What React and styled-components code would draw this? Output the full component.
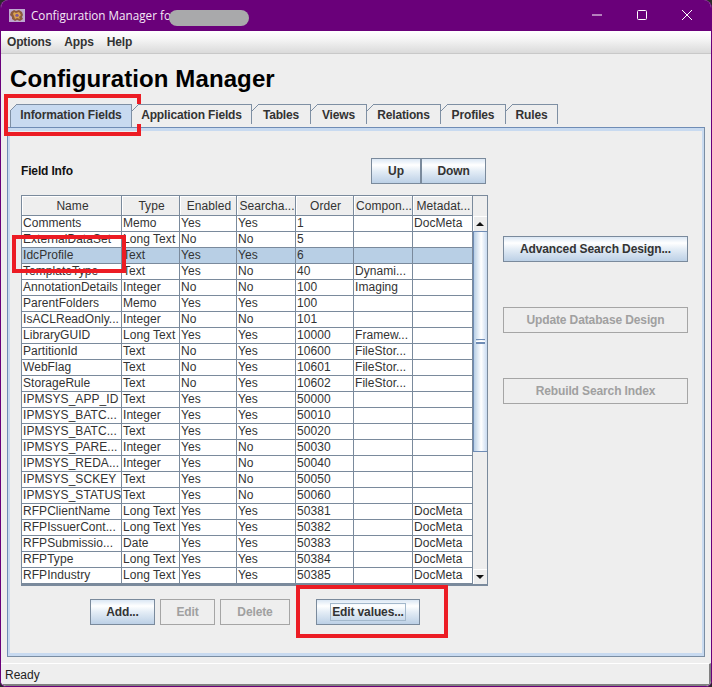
import React from 'react';
import styled, { createGlobalStyle } from 'styled-components';

const GlobalStyle = createGlobalStyle`
  html, body {
    margin: 0;
    padding: 0;
    background: #2b2b2b;
  }
  * {
    box-sizing: border-box;
  }
`;

const TABS = [
  { label: 'Information Fields', width: 122 },
  { label: 'Application Fields', width: 120 },
  { label: 'Tables', width: 59 },
  { label: 'Views', width: 56 },
  { label: 'Relations', width: 74 },
  { label: 'Profiles', width: 65 },
  { label: 'Rules', width: 52 },
];

const COLUMNS = [
  { name: 'Name', width: 100 },
  { name: 'Type', width: 58 },
  { name: 'Enabled', width: 57 },
  { name: 'Searcha...', width: 59 },
  { name: 'Order', width: 58 },
  { name: 'Compon...', width: 59 },
  { name: 'Metadat...', width: 60 },
];

const ROWS = [
  ['Comments', 'Memo', 'Yes', 'Yes', '1', '', 'DocMeta'],
  ['ExternalDataSet', 'Long Text', 'No', 'No', '5', '', ''],
  ['IdcProfile', 'Text', 'Yes', 'Yes', '6', '', ''],
  ['TemplateType', 'Text', 'Yes', 'No', '40', 'Dynami...', ''],
  ['AnnotationDetails', 'Integer', 'No', 'No', '100', 'Imaging', ''],
  ['ParentFolders', 'Memo', 'Yes', 'Yes', '100', '', ''],
  ['IsACLReadOnly...', 'Integer', 'No', 'No', '101', '', ''],
  ['LibraryGUID', 'Long Text', 'Yes', 'Yes', '10000', 'Framew...', ''],
  ['PartitionId', 'Text', 'No', 'Yes', '10600', 'FileStor...', ''],
  ['WebFlag', 'Text', 'No', 'Yes', '10601', 'FileStor...', ''],
  ['StorageRule', 'Text', 'No', 'Yes', '10602', 'FileStor...', ''],
  ['IPMSYS_APP_ID', 'Text', 'Yes', 'Yes', '50000', '', ''],
  ['IPMSYS_BATC...', 'Integer', 'Yes', 'Yes', '50010', '', ''],
  ['IPMSYS_BATC...', 'Text', 'Yes', 'Yes', '50020', '', ''],
  ['IPMSYS_PARE...', 'Integer', 'Yes', 'No', '50030', '', ''],
  ['IPMSYS_REDA...', 'Integer', 'Yes', 'No', '50040', '', ''],
  ['IPMSYS_SCKEY', 'Text', 'Yes', 'No', '50050', '', ''],
  ['IPMSYS_STATUS', 'Text', 'Yes', 'No', '50060', '', ''],
  ['RFPClientName', 'Long Text', 'Yes', 'Yes', '50381', '', 'DocMeta'],
  ['RFPIssuerCont...', 'Long Text', 'Yes', 'Yes', '50382', '', 'DocMeta'],
  ['RFPSubmissio...', 'Date', 'Yes', 'Yes', '50383', '', 'DocMeta'],
  ['RFPType', 'Long Text', 'Yes', 'Yes', '50384', '', 'DocMeta'],
  ['RFPIndustry', 'Long Text', 'Yes', 'Yes', '50385', '', 'DocMeta'],
  ['', '', '', '', '', '', ''],
];

export default function App() {
  return (
    <>
      <GlobalStyle />
      <Window>
        <TitleBar>
          <AppIcon viewBox="0 0 16 13">
            <rect width="16" height="13" fill="#bfa9d0" />
            <path d="M2 3l3-2 2 1 3-1 3 2 1 3-1 2 1 2-3 2-3-1-2 1-3-2 0-2-2-2z" fill="#8d5a3e" />
            <path d="M5 3l2 1 3-1 2 3-2 2 1 2-3-1-2 1-1-3-1-2z" fill="#dca24e" />
            <path d="M7 5l2 0 1 2-2 1-2-1z" fill="#7f5a96" />
          </AppIcon>
          <TitleText>Configuration Manager fo</TitleText>
          <TitleBlur />
          <WindowControls>
            <WindowIcon viewBox="0 0 10 10">
              <path d="M0 5h10" />
            </WindowIcon>
            <WindowIcon viewBox="0 0 10 10">
              <rect x="0.5" y="0.5" width="9" height="9" rx="1" />
            </WindowIcon>
            <WindowIcon viewBox="0 0 10 10">
              <path d="M0 0l10 10M10 0L0 10" />
            </WindowIcon>
          </WindowControls>
        </TitleBar>

        <MenuBar>
          <MenuItem>Options</MenuItem>
          <MenuItem>Apps</MenuItem>
          <MenuItem>Help</MenuItem>
        </MenuBar>

        <Content>
          <Heading>Configuration Manager</Heading>

          <TabStrip>
            {TABS.map((tab, index) => (
              <Tab key={tab.label} $width={tab.width} $active={index === 0}>{tab.label}</Tab>
            ))}
          </TabStrip>

          <TabPanel>
            <LeftColumn>
              <FieldInfoRow>
                <FieldInfoLabel>Field Info</FieldInfoLabel>
                <ButtonPair>
                  <ActionButton $width={50}>Up</ActionButton>
                  <ActionButton $width={65}>Down</ActionButton>
                </ButtonPair>
              </FieldInfoRow>

              <TableFrame>
                <FieldTable>
                  <colgroup>
                    {COLUMNS.map((col) => (
                      <col key={col.name} width={col.width} />
                    ))}
                  </colgroup>
                  <thead>
                    <tr>
                      {COLUMNS.map((col) => (
                        <HeaderCell key={col.name}>{col.name}</HeaderCell>
                      ))}
                    </tr>
                  </thead>
                  <tbody>
                    {ROWS.map((row, rowIndex) => (
                      <tr key={rowIndex}>
                        {row.map((cell, cellIndex) => (
                          <Cell key={cellIndex} $selected={rowIndex === 2}>{cell}</Cell>
                        ))}
                      </tr>
                    ))}
                  </tbody>
                </FieldTable>

                <ScrollBar>
                  <HeaderGap />
                  <ScrollButton>
                    <ArrowIcon viewBox="0 0 8 4">
                      <path d="M4 0l4 4H0z" />
                    </ArrowIcon>
                  </ScrollButton>
                  <ScrollThumb>
                    <Grip />
                  </ScrollThumb>
                  <ScrollTrack />
                  <ScrollButton>
                    <ArrowIcon viewBox="0 0 8 4">
                      <path d="M0 0h8L4 4z" />
                    </ArrowIcon>
                  </ScrollButton>
                </ScrollBar>
              </TableFrame>

              <BottomButtons>
                <ActionButton $width={65}>Add...</ActionButton>
                <ActionButton $width={55} disabled>Edit</ActionButton>
                <ActionButton $width={70} disabled>Delete</ActionButton>
                <EditValuesButton $width={104}>
                  <FocusRing>Edit values...</FocusRing>
                </EditValuesButton>
              </BottomButtons>
            </LeftColumn>

            <RightColumn>
              <ActionButton $width={185}>Advanced Search Design...</ActionButton>
              <ActionButton $width={185} disabled>Update Database Design</ActionButton>
              <ActionButton $width={185} disabled>Rebuild Search Index</ActionButton>
            </RightColumn>
          </TabPanel>
        </Content>

        <StatusBar>Ready</StatusBar>

        <Annotation $x={3} $y={94} $w={137} $h={42} />
        <Annotation $x={11} $y={235} $w={114} $h={38} />
        <Annotation $x={295} $y={585} $w={152} $h={53} />
      </Window>
    </>
  );
}

const Window = styled.div`
  position: relative;
  display: flex;
  flex-direction: column;
  width: 712px;
  height: 687px;
  overflow: hidden;
  background: #eeeeee;
  border: 1px solid #6a007a;
  border-top: 0;
  border-radius: 8px 8px 6px 6px;
  font-family: 'Liberation Sans', Arial, sans-serif;
  font-size: 12px;
  color: #333333;
`;

const TitleBar = styled.div`
  position: relative;
  display: flex;
  align-items: center;
  flex: 0 0 31px;
  padding: 0 0 1px 8px;
  background: #6a007a;
`;

const AppIcon = styled.svg`
  width: 16px;
  height: 13px;
`;

const TitleText = styled.span`
  margin-left: 6px;
  font-family: 'Open Sans', 'Noto Sans', sans-serif;
  font-size: 11.7px;
  color: #f4e9f6;
`;

const TitleBlur = styled.div`
  position: absolute;
  left: 168px;
  top: 10px;
  width: 80px;
  height: 16px;
  border-radius: 8px;
  background: #a9a9ab;
`;

const WindowControls = styled.div`
  display: flex;
  align-items: center;
  gap: 35px;
  margin-left: auto;
  padding-right: 19px;
`;

const WindowIcon = styled.svg`
  width: 10px;
  height: 10px;
  overflow: visible;
  fill: none;
  stroke: #ffffff;
  stroke-width: 1;
`;

const MenuBar = styled.div`
  display: flex;
  align-items: center;
  gap: 13px;
  flex: 0 0 23px;
  padding: 0 0 1px 6px;
  background: linear-gradient(#ffffff, #f6f6f6 35%, #dadada);
  border-bottom: 1px solid #c8c8c8;
`;

const MenuItem = styled.span`
  font-weight: bold;
  letter-spacing: -0.15px;
`;

const Content = styled.div`
  display: flex;
  flex-direction: column;
  flex: 1;
  min-height: 0;
  padding: 0 6px 0 6px;
`;

const Heading = styled.h1`
  margin: 11px 0 12px 3px;
  height: 27px;
  font-size: 24px;
  line-height: 27px;
  font-weight: bold;
  letter-spacing: 0.1px;
  color: #000000;
`;

const TabStrip = styled.div`
  position: relative;
  z-index: 1;
  display: flex;
  flex: 0 0 19px;
  padding-left: 3px;
`;

const Tab = styled.div`
  position: relative;
  width: ${(p) => p.$width}px;
  height: ${(p) => (p.$active ? '23px' : '20px')};
  padding-top: 2px;
  border: 1px solid #7e8fa3;
  border-bottom: 0;
  border-left: ${(p) => (p.$active ? '1px solid #7e8fa3' : '0')};
  font-weight: bold;
  letter-spacing: -0.15px;
  line-height: 16px;
  text-align: center;
  white-space: nowrap;
  background: ${(p) => (p.$active ? '#c8daf0' : '#eeeeee')};

  &::before {
    content: '';
    position: absolute;
    top: -1px;
    left: ${(p) => (p.$active ? '-1px' : '0')};
    width: 7px;
    height: 7px;
    background: linear-gradient(135deg, #eeeeee 44%, #7e8fa3 44%, #7e8fa3 56%, transparent 56%);
  }
`;

const TabPanel = styled.div`
  display: flex;
  gap: 15px;
  width: 698px;
  height: 534px;
  padding: 30px 15px 0 13px;
  background: #eeeeee;
  border: 1px solid #6f8cb5;
  border-bottom-color: #7a8da3;
  border-right-color: #7a8da3;
  box-shadow: inset 0 3px 0 #c8daf0, inset 2px 0 0 #c8daf0, inset -2px 0 0 #c8daf0, inset 0 -3px 0 #c8daf0;
`;

const LeftColumn = styled.div`
  display: flex;
  flex-direction: column;
  flex: 0 0 467px;
`;

const FieldInfoRow = styled.div`
  display: flex;
  align-items: center;
  justify-content: space-between;
  height: 26px;
  margin-bottom: 11px;
`;

const FieldInfoLabel = styled.span`
  font-weight: bold;
  letter-spacing: -0.15px;
  color: #111111;
`;

const ButtonPair = styled.div`
  display: flex;
  margin-right: 2px;
`;

const ActionButton = styled.button`
  width: ${(p) => p.$width}px;
  height: 26px;
  padding: 0;
  border: 1px solid ${(p) => (p.disabled ? '#a5a5a5' : '#7a8a9c')};
  background: ${(p) =>
    p.disabled ? '#eeeeee' : 'linear-gradient(#dbe7f4, #ffffff 25%, #e4edf6 50%, #bcd0e6)'};
  font-family: inherit;
  font-size: 12px;
  font-weight: bold;
  letter-spacing: -0.12px;
  color: ${(p) => (p.disabled ? '#a0a0a0' : '#333333')};
`;

const EditValuesButton = styled(ActionButton)`
  display: flex;
  align-items: center;
  justify-content: center;
  margin-left: 21px;
`;

const FocusRing = styled.span`
  padding: 1px 1px;
  border: 1px solid #a3b8cc;
  line-height: 14px;
`;

const TableFrame = styled.div`
  display: flex;
  height: 391px;
  overflow: hidden;
  border: 1px solid #7a8a9c;
  border-bottom: 2px solid #7a8a9c;
  background: #eeeeee;
`;

const FieldTable = styled.table`
  flex: 0 0 451px;
  width: 451px;
  height: min-content;
  table-layout: fixed;
  border-collapse: separate;
  border-spacing: 0;
  letter-spacing: 0.05px;
  background: #ffffff;
`;

const HeaderCell = styled.th`
  height: 20px;
  padding: 0 0 0 2px;
  font-weight: normal;
  text-align: center;
  white-space: nowrap;
  overflow: hidden;
  background: #eeeeee;
  border-right: 1px solid #7a8a9c;
  border-bottom: 1px solid #7a8a9c;
  box-shadow: inset 1px 1px 0 #ffffff;
`;

const Cell = styled.td`
  height: 16px;
  padding: 0 0 0 1px;
  line-height: 15px;
  white-space: nowrap;
  overflow: hidden;
  background: ${(p) => (p.$selected ? '#b8cfe5' : '#ffffff')};
  border-right: 1px solid #7a8a9c;
  border-bottom: 1px solid #7a8a9c;
`;

const ScrollBar = styled.div`
  display: flex;
  flex-direction: column;
  flex: 1;
  background: #eeeeee;
`;

const HeaderGap = styled.div`
  flex: 0 0 20px;
`;

const ScrollButton = styled.div`
  display: flex;
  align-items: center;
  justify-content: center;
  flex: 0 0 15px;
  background: #eeeeee;
  box-shadow: inset 1px 1px 0 #ffffff;
`;

const ArrowIcon = styled.svg`
  width: 8px;
  height: 4px;
  fill: #111111;
`;

const ScrollThumb = styled.div`
  display: flex;
  align-items: center;
  justify-content: center;
  flex: 0 0 221px;
  background: linear-gradient(90deg, #b8cfe5, #e6eef7 35%, #ffffff 55%, #c8daf0);
  border-top: 1px solid #6f8cb5;
  border-left: 1px solid #6f8cb5;
  border-bottom: 1px solid #6f8cb5;
`;

const ScrollTrack = styled.div`
  flex: 1;
  background: #eeeeee;
`;

const Grip = styled.div`
  width: 9px;
  height: 5px;
  border-top: 1px solid #6f8cb5;
  border-bottom: 1px solid #6f8cb5;
  background: linear-gradient(#ffffff 1px, #6f8cb5 1px, #6f8cb5 2px, #ffffff 2px);
  background-position: 0 1px;
  background-repeat: no-repeat;
`;

const BottomButtons = styled.div`
  display: flex;
  gap: 5px;
  margin-top: 13px;
  padding-left: 69px;
`;

const RightColumn = styled.div`
  display: flex;
  flex-direction: column;
  gap: 45px;
  padding-top: 78px;
`;

const StatusBar = styled.div`
  flex: 0 0 23px;
  margin-top: 6px;
  padding: 2px 0 0 4px;
  line-height: 18px;
  color: #222222;
  background: #eeeeee;
  border-top: 1px solid #ffffff;
  border-bottom: 2px solid #808080;
  border-right: 2px solid #808080;
`;

const Annotation = styled.div`
  position: absolute;
  left: ${(p) => p.$x}px;
  top: ${(p) => p.$y}px;
  width: ${(p) => p.$w}px;
  height: ${(p) => p.$h}px;
  border: 4px solid #ec1c24;
  pointer-events: none;
`;
